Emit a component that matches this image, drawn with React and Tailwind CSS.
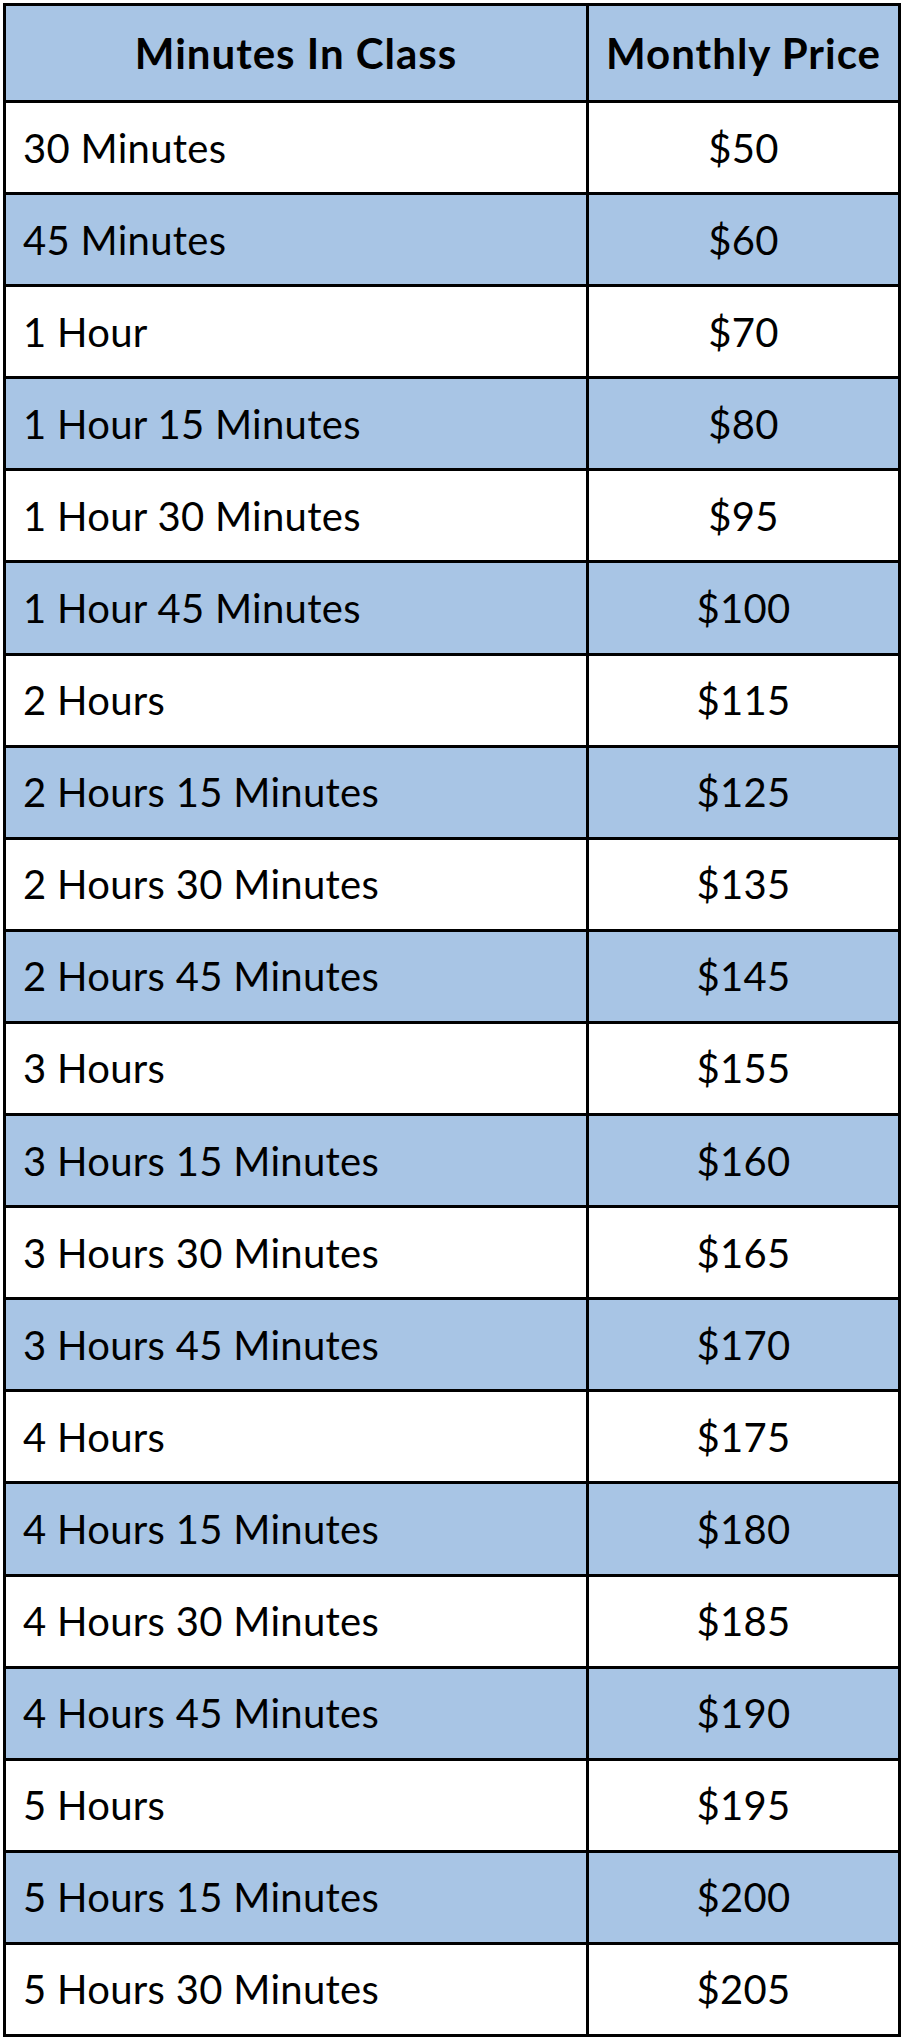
const rows = [
    ['30 Minutes', '$50'],
    ['45 Minutes', '$60'],
    ['1 Hour', '$70'],
    ['1 Hour 15 Minutes', '$80'],
    ['1 Hour 30 Minutes', '$95'],
    ['1 Hour 45 Minutes', '$100'],
    ['2 Hours', '$115'],
    ['2 Hours 15 Minutes', '$125'],
    ['2 Hours 30 Minutes', '$135'],
    ['2 Hours 45 Minutes', '$145'],
    ['3 Hours', '$155'],
    ['3 Hours 15 Minutes', '$160'],
    ['3 Hours 30 Minutes', '$165'],
    ['3 Hours 45 Minutes', '$170'],
    ['4 Hours', '$175'],
    ['4 Hours 15 Minutes', '$180'],
    ['4 Hours 30 Minutes', '$185'],
    ['4 Hours 45 Minutes', '$190'],
    ['5 Hours', '$195'],
    ['5 Hours 15 Minutes', '$200'],
    ['5 Hours 30 Minutes', '$205'],
];

export default function App() {
    return (
        <div className="bg-white min-h-[2038px] pt-[3px] pl-[3px] font-['Lato','Open_Sans',sans-serif] text-black">
            <div className="w-[898px] border-l-[3px] border-t-[3px] border-black">
                {/* Header */}
                <div className="flex h-[97px] border-b-[3px] border-black bg-[#a8c5e5] font-bold text-[42px] tracking-[1px]">
                    <div className="w-[583px] border-r-[3px] border-black flex items-center justify-center">
                        Minutes In Class
                    </div>
                    <div className="flex-1 border-r-[3px] border-black flex items-center justify-center">
                        Monthly Price
                    </div>
                </div>

                {rows.map(([time, price], i) => (
                    <div
                        key={time}
                        className={`flex h-[92.1px] border-b-[3px] border-black text-[40px] tracking-[0.3px] ${i % 2 === 1 ? 'bg-[#a8c5e5]' : 'bg-white'}`}
                    >
                        <div className="w-[583px] border-r-[3px] border-black flex items-center pl-[17px]">
                            {time}
                        </div>
                        <div className="flex-1 border-r-[3px] border-black flex items-center justify-center">
                            {price}
                        </div>
                    </div>
                ))}
            </div>
        </div>
    );
}
